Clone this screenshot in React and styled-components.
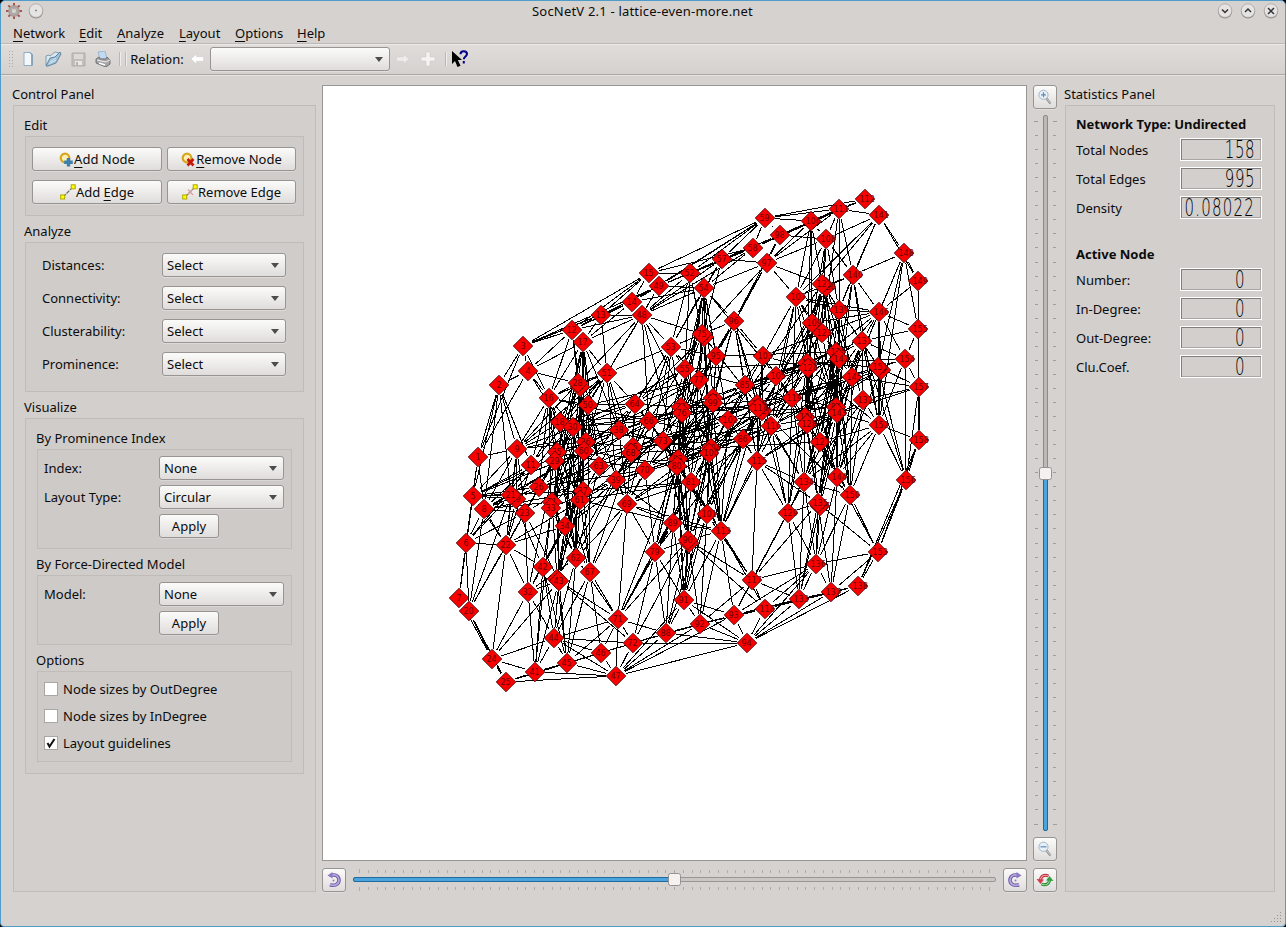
import React from "react";
import styled, { createGlobalStyle, css } from "styled-components";

const Global = createGlobalStyle`
  * { box-sizing: border-box; }
  html, body { margin: 0; background: #000; }
  body { font-family: "Noto Sans", sans-serif; font-size: 13px; letter-spacing: 0; color: #0c0c0c; }
`;

const Window = styled.div`
  width: 1286px; height: 927px; overflow: hidden;
  border: 1px solid #4f9cc8; border-radius: 5px 5px 4px 4px;
  background: #d6d2cf;
  display: flex; flex-direction: column;
`;
const TitleBar = styled.header`
  height: 22px; flex: none; padding: 0 6px 2px 5px;
  display: grid; grid-template-columns: 100px 1fr 100px; align-items: center;
  text-align: center; letter-spacing: 0.2px;
`;
const TitleSide = styled.div`
  display: flex; gap: ${p => p.$gap}px; justify-content: ${p => p.$end ? "flex-end" : "flex-start"};
`;
const MenuBar = styled.nav`
  height: 21px; flex: none; display: flex; padding-left: 12px; align-items: center;
  border-bottom: 1px solid #bdb9b6;
`;
const MenuItem = styled.span`
  width: ${p => p.$w}px; white-space: nowrap; line-height: 20px;
`;
const Key = styled.span`
  text-decoration: underline; text-underline-offset: 3px; text-decoration-thickness: 1px;
`;
const ToolBar = styled.div`
  height: 31px; flex: none; display: flex; align-items: center; padding: 0 0 1px 7px;
  border-top: 1px solid #eceae8; border-bottom: 1px solid #aaa6a3;
  background: linear-gradient(#dfdcd9, #d5d1ce);
`;
const ToolSlot = styled.span`
  width: ${p => p.$w}px; height: 28px; display: flex; align-items: center; justify-content: center;
`;
const raised = css`
  border: 1px solid #989491; border-radius: 3px;
  background: linear-gradient(#fbfbfa, #dfdddc);
  box-shadow: 0 1px 0 rgba(255,255,255,.25);
`;
const Combo = styled.div`
  ${raised}
  width: ${p => p.$w}px; height: 24px; padding: 0 6px 0 4px;
  display: flex; align-items: center; justify-content: space-between;
`;
const Arrow = styled.span`
  border: 4px solid transparent; border-top: 5px solid #4c4c4c; border-bottom: 0;
`;
const Button = styled.button`
  ${raised}
  width: ${p => p.$w}px; height: 24px; padding: 0; font: inherit; letter-spacing: inherit; color: inherit;
  display: flex; align-items: center; justify-content: center; white-space: nowrap;
`;
const Body = styled.main`
  flex: 1; display: flex; padding: 9px 10px 0 12px; border-top: 1px solid #e6e4e2;
`;
const Side = styled.section`
  width: ${p => p.$w}px; flex: none; height: 807px; display: flex; flex-direction: column;
  margin-left: ${p => p.$push ? "auto" : 0};
`;
const Label = styled.div`
  height: ${p => p.$h || 20}px; line-height: ${p => p.$lh || 18}px; margin-left: -1px; flex: none; white-space: nowrap;
`;
const Box = styled.div`
  border: 1px solid #c0bcb9; background: rgba(120,110,105,.02);
  height: ${p => p.$h}px; padding: ${p => p.$pad || "0"};
  flex: none;
`;
const ButtonGrid = styled.div`
  display: grid; grid-template-columns: 130px 129px; column-gap: 5px; row-gap: 9px;
`;
const Row = styled.div`
  display: flex; align-items: center; height: 24px; margin-bottom: ${p => p.$mb}px;
`;
const RowLabel = styled.span`
  width: ${p => p.$w}px; flex: none; white-space: nowrap;
`;
const Check = styled.label`
  height: 27px; display: flex; align-items: center; gap: 5px; white-space: nowrap;
`;
const CheckBox = styled.span`
  width: 14px; height: 14px; border: 1px solid #aaa6a2; background: #fff; display: flex;
`;
const Center = styled.section`
  margin-left: 6px; width: 735px; flex: none; display: grid;
  grid-template-columns: 705px 24px; grid-template-rows: 776px 24px; column-gap: 6px; row-gap: 7px;
`;
const Canvas = styled.div`
  border: 1px solid #999592; background: #fff;
`;
const VTools = styled.div`
  display: flex; flex-direction: column; justify-content: space-between;
`;
const HTools = styled.div`
  display: flex; justify-content: space-between;
`;
const StatRow = styled.div`
  display: flex; justify-content: space-between; align-items: center; height: 23px; margin-bottom: 6px;
`;
const Lcd = styled.div`
  width: 82px; height: 23px; padding-right: ${p => p.$pr}px;
  border: 1px solid #fff; box-shadow: inset 1px 1px 0 #817d7a, inset -1px -1px 0 #aaa6a3;
  display: flex; justify-content: flex-end; align-items: center;
  font: 200 15px "DejaVu Sans Light", "DejaVu Sans", sans-serif; letter-spacing: ${p => p.$ls}px;
`;
const LcdText = styled.span`
  transform: scaleY(1.6); line-height: 14px; color: #000;
`;
const Heading = styled.div`
  font-weight: 700; height: ${p => p.$h}px; padding-top: ${p => p.$pt || 0}px; line-height: 20px; white-space: nowrap;
`;
const StatusBar = styled.footer`
  height: 20px; display: flex; justify-content: flex-end; align-items: flex-end; padding: 0 3px 3px 0;
`;

const NODES = `1,478,457 2,499,385 3,523,346 4,528,371 5,473,496 6,466,543 7,459,598 8,484,509 9,517,449 11,531,465
12,572,330 13,601,315 14,632,302 15,649,273 16,549,398 17,583,342 18,560,422 30,573,427 27,580,387 28,578,383 20,469,611
19,516,499 21,511,495 22,506,545 23,525,513 24,492,659 25,506,682 26,539,487 35,557,452 29,555,461 31,552,502 33,551,508
34,565,526 32,528,592 36,586,442 60,584,451 37,583,491 61,580,500 38,619,430 39,616,480 41,535,672 42,543,567 40,557,579 43,559,581
44,554,638 45,567,663 46,601,653 47,616,676 48,642,315 49,659,286 50,588,405 51,607,373 52,690,273 53,671,347 54,704,288
55,685,369 57,722,259 58,753,248 59,765,218 62,576,558 63,599,466 64,635,404 66,649,421 67,590,572 65,633,447 68,631,453
69,627,504 70,645,470 71,618,619 72,633,643 73,663,441 78,704,337 75,702,334 74,681,407 76,682,413 77,699,380 79,655,552
83,678,459 80,677,466 81,691,482 85,745,385 86,743,439 88,666,633 89,673,523 82,689,543 90,688,540 91,684,600 92,700,624
93,734,615 94,747,643 95,716,356 96,734,321 97,767,263 98,780,235 87,713,398 99,713,403 104,711,448 100,709,453 101,707,514
102,728,420 103,763,356 105,776,376 106,811,221 107,796,297 108,826,239 109,812,323 111,839,209 112,865,199 113,721,531
110,757,404 120,762,411 114,758,408 115,757,461 116,771,426 117,752,580 118,765,609 119,792,398 130,826,287 121,822,284
123,822,333 122,807,363 124,808,368 126,805,417 128,807,424 127,820,442 129,788,513 131,862,341 132,863,400 133,799,599
134,804,482 147,820,506 135,818,503 136,816,564 137,831,592 138,858,586 139,839,310 140,853,275 141,879,215 125,836,352
142,839,359 145,852,377 84,836,407 143,837,413 144,837,477 146,879,312 148,904,253 149,918,281 150,850,495 56,881,370
151,878,367 152,879,425 153,878,552 154,905,359 155,918,329 156,906,480 157,919,387 158,919,440`
  .split(/\s+/).map(t => t.split(",").map(Number));
const at = new Map(NODES.map(n => [n[0], n]));

const LINKS = `1:2,3,4,5,6,7,8,9 2:3,4,5,9,11,8,21 3:4,12,13,14,15,16,49 4:12,17,16,28,18,1 5:6,7,9,8,11,21 6:7,8,20,22,21,23,11
7:20,24,5 8:9,11,22,23,20,21 9:21,22,16,18,23,11,28 20:24,25,22,21,23 24:25,32,41,43,44 22:32,42,21,23,34,9,11,24
25:41,45,46,47,72 41:32,42,43,45,46,47,44,33 32:42,43,34,44,23,62 44:42,43,46,47,71,72,45,62,67 45:42,43,46,47,62,67,71,40,72
46:71,72,88,67,47 47:71,72,88,91,92,93,94 71:67,62,43,88,79,80,90,69,72,89,81 72:71,88,92,79,90,94,43,93 88:79,90,92,93,94,89,101,91
91:79,90,92,93,89,101,113 92:90,93,94,101,113,118,117 93:94,117,118,113,129,134,136,133,138 94:118,133,137,138,91,136
117:113,90,129,118,136,133,135,115,101,134 118:133,136,137,138,113,90 133:129,136,137,138,134,135,147 136:129,134,135,147,144,150,153,137
137:150,144,135,153,138 138:153,156,158 153:156,150,135,144,158 156:158,152,151,154,157 158:157,155,152,149 157:155,154,151,145,132,149
155:149,148,154,146,131 154:146,151,152,145,131 149:148,146,141 148:141,146,151,152,140,145 141:112,111,140,108,107,139,121
112:111,106,98,59,58 111:106,108,59,98,140,139,123,97,142 106:108,98,59,58,97,107,121,122,109 108:98,97,107,121,109,139,140,123
98:58,97,96,57,52 97:58,57,107,96,95,121,54,75 107:109,123,121,122,139,103,124,115,100,116 96:54,75,95,103,77,85,53
59:58,57,52,15,49,14,98 58:57,52,49,15,54,48 57:52,49,54,48,75,53,97 52:49,15,48,54,53,75,55 54:49,75,53,55,48,77,14
15:14,49,13,12,52,3 14:13,49,48,12,17 13:12,17,48,51,49 12:17,28,16,27,48 17:28,16,48,51,50,60 48:51,53,75,50,28 49:48,51,13
51:50,28,64,30,60,38,16,9,18 16:18,30,9,11,28,50,29,26 53:75,55,77,64,51,95,65,68 146:140,131,151,139,142,145,152 140:139,130,131,142,143,107,152
131:151,154,145,139,132,143,127,156 129:135,134,127,126,115,119,116 79:80,81,89,90,69,83,70,100 69:67,62,79,70,39,89,71,68,80 113:101,90,81,115,100,89,86,102,116
152:143,127,150,144,132 150:143,132,127,145,134 115:102,86,134,135,103,85 64:55,50,38,66,73,60,77`
  .split(/\s+/).flatMap(t => {
    const [a, rest] = t.split(":");
    return rest.split(",").map(b => [+a, +b]);
  });

// Open areas of the drawing: cx, cy, rx, ry.
const HOLES = [[622, 350, 21, 30], [533, 422, 11, 19], [760, 307, 18, 34], [628, 557, 22, 42], [758, 522, 22, 46],
  [855, 242, 15, 16], [868, 460, 14, 24], [890, 335, 10, 12], [523, 560, 9, 15]];
const crossesHole = (p, q) => HOLES.some(([cx, cy, rx, ry]) => {
  for (let t = 0; t <= 1; t += 0.04) {
    const x = (p[1] + (q[1] - p[1]) * t - cx) / rx;
    const y = (p[2] + (q[2] - p[2]) * t - cy) / ry;
    if (x * x + y * y < 1) return true;
  }
  return false;
});
const scatter = (a, b) => {
  const v = Math.sin(a * 12.9898 + b * 78.233) * 43758.5453;
  return (v - Math.floor(v)) * 100;
};
const buildEdges = () => {
  const seen = new Set();
  const out = [];
  const add = (a, b) => {
    const k = Math.min(a, b) * 1000 + Math.max(a, b);
    if (a === b || seen.has(k)) return;
    seen.add(k);
    out.push([at.get(a), at.get(b)]);
  };
  LINKS.forEach(([a, b]) => add(a, b));
  const inner = NODES.filter(([id, x, y]) => {
    const u = (x - 697) / 225, v = (y - 440 + (x - 697) * 0.28) / 165;
    return id !== 153 && u * u + v * v < 1;
  });
  inner.forEach((p, i) => inner.slice(i + 1).forEach(q => {
    const dx = Math.abs(p[1] - q[1]), dy = Math.abs(p[2] - q[2]);
    const rising = (q[1] - p[1]) * (q[2] - p[2]) < 0;
    const h = scatter(p[0], q[0]);
    let chance = 0;
    if (dx < 38 && dy > 40 && dy < 172) chance = 38;
    else if (dx > 35 && dx < 125 && dy < dx * 0.62 && rising) chance = 30;
    else if (dx > 35 && dx < 110 && dy < dx * 0.3) chance = 12;
    else if (dx > 30 && dx < 95 && dy > 40 && dy < 140) chance = rising ? 16 : 8;
    if (h < chance && !crossesHole(p, q)) add(p[0], q[0]);
  }));
  return out;
};
const EDGES = buildEdges();
const edgePath = EDGES.map(([p, q]) => {
  const dx = q[1] - p[1], dy = q[2] - p[2], l = Math.hypot(dx, dy);
  if (l < 22) return "";
  const ux = dx / l * 10, uy = dy / l * 10;
  return `M${(p[1] + ux).toFixed(1)} ${(p[2] + uy).toFixed(1)}L${(q[1] - ux).toFixed(1)} ${(q[2] - uy).toFixed(1)}`;
}).join("");

// Nodes are painted in order, so a later one lies over the label of an earlier one.
const Graph = () => (
  <svg width="703" height="774" viewBox="323 86 703 774" style={{ display: "block" }}>
    <path d={edgePath} stroke="#000" strokeWidth="1" fill="none" shapeRendering="crispEdges" />
    {NODES.map(([id, x, y]) => (
      <g key={id}>
        <path d={`M${x - 9.8} ${y}L${x} ${y - 9.8}L${x + 9.8} ${y}L${x} ${y + 9.8}Z`} fill="#fb0000" stroke="#3a0000" strokeWidth="0.8" />
        <text x={x - (id < 10 ? 2.5 : 5.5)} y={y + 2.7} fontSize="8" fontFamily="DejaVu Sans, sans-serif" fill="#650000">{id}</text>
      </g>
    ))}
  </svg>
);

const Icon = ({ s = 16, children, vb }) => (
  <svg width={s} height={s} viewBox={vb || `0 0 ${s} ${s}`} fill="none" style={{ flex: "none" }}>{children}</svg>
);
const Orb = ({ d }) => (
  <Icon s={16}>
    <circle cx="8" cy="8.6" r="7" fill="#8f8b88" />
    <circle cx="8" cy="7.6" r="6.8" fill="#e6e4e3" stroke="#a29e9b" strokeWidth=".7" />
    <path d={d} stroke="#333" strokeWidth="1.5" />
  </Icon>
);
const AppIcon = () => (
  <Icon s={16}>
    <circle cx="8" cy="8" r="4.6" stroke="#a8a19d" strokeWidth="2.6" />
    {[0, 45, 90, 135, 180, 225, 270, 315].map(a => (
      <rect key={a} x="7" y="0" width="2" height="2.4" fill="#a9544c" transform={`rotate(${a} 8 8)`} />
    ))}
    <circle cx="8" cy="8" r="2.7" stroke="#8d8784" strokeWidth=".6" />
  </Icon>
);
const NewIcon = () => <Icon s={16}><path d="M4 1.5h6l2 2v11H4z" fill="#f4f8fb" stroke="#8fb0c8" /><path d="M10 1.5l2 2v11" stroke="#5580a0" /></Icon>;
const OpenIcon = () => (
  <Icon s={18}>
    <path d="M2 15V6l3-1 1 1 5-4 4 1-6 6z" fill="#d9e6ee" stroke="#6d8ba0" strokeWidth=".8" />
    <path d="M2 16L6 8l5-1 5-5 1 2-5 9-8 3z" fill="#9fc1d7" stroke="#4d7590" strokeWidth=".8" />
    <path d="M6 12l6-4M5 14l7-4" stroke="#d6e7f1" />
  </Icon>
);
const SaveIcon = () => <Icon s={15}><path d="M1 1h13v13H1z" fill="#c2bebb" stroke="#b2aeab" /><path d="M3 2h9v5H3z" fill="#dcd9d7" /><path d="M4 9h7v4H4z" fill="#eae8e7" /><path d="M5 10h2v3H5z" fill="#b5b1ae" /></Icon>;
const PrintIcon = () => (
  <Icon s={16}>
    <path d="M3 1l7-1 2 8H5z" fill="#c2d9f2" stroke="#8aa7c6" strokeWidth=".7" />
    <path d="M1 8l3-2 1 2h6l1-2 3 3v4l-4 3-10-4z" fill="#a5a5a5" stroke="#5f5f5f" strokeWidth=".8" />
    <path d="M2 9l9 2 4-2" stroke="#eee" /><path d="M4 12l6 2" stroke="#fff" strokeWidth="1.5" />
  </Icon>
);
const BackArrow = ({ flip }) => (
  <Icon s={14}><path transform={flip ? "translate(14 0) scale(-1 1)" : undefined} d="M1 7l5.500-5v2.800h7v4.400h-7V12z" fill={flip ? "#eeecea" : "#fff"} stroke="#c8c5c2" strokeWidth=".4" /></Icon>
);
const HelpPointer = () => (
  <Icon s={18}>
    <path d="M1 1v13l3-3 2.500 6 3-1.200-2.600-5.800H11z" fill="#000" />
    <path d="M9.500 4.200C9.500 2.500 10.800 1.300 12.700 1.300c2 0 3.300 1.200 3.300 2.800 0 2.300-3.200 2.500-3.200 5.200" stroke="#00008c" strokeWidth="2" />
    <path d="M11.800 11h2v2.400h-2z" fill="#00008c" />
  </Icon>
);
const NodeIcon = ({ remove }) => (
  <Icon s={15}>
    <circle cx="6" cy="6" r="4.300" fill="#fbf1b8" stroke="#d9a51c" strokeWidth="2.200" />
    {remove
      ? <path d="M6.500 7l6 6.500M12.500 7l-6 6.500" stroke="#c2160e" strokeWidth="2.600" />
      : <path d="M9.500 6v8.500M5.200 10.200h8.600" stroke="#3a7fae" strokeWidth="3.400" />}
  </Icon>
);
const EdgeIcon = ({ remove }) => (
  <Icon s={16}>
    <path d="M3 13L13 3" stroke="#666" strokeWidth="1.200" strokeDasharray="4 1" />
    <rect x=".7" y="11" width="4" height="4" fill="#ff0" stroke="#b0a800" />
    <rect x="11.200" y=".8" width="4" height="4" fill="#ff0" stroke="#b0a800" />
    {remove && <path d="M6 5.500l5 5.500M10.500 5.500L6 10.500" stroke="#d9a0a0" strokeWidth="1.200" />}
  </Icon>
);
const Magnifier = ({ plus }) => (
  <Icon s={16}>
    <path d="M9.500 9.500l4 5" stroke="#8b8b8b" strokeWidth="2.200" /><path d="M10 10l3.400 4" stroke="#e7e7e7" strokeWidth=".8" />
    <circle cx="6.500" cy="5.800" r="4.600" fill="#e6f0f8" stroke="#a3b7c9" />
    <path d={plus ? "M6.500 3.300v5M4 5.800h5" : "M3.500 5.800h6"} stroke="#5f8cb5" strokeWidth="1.200" />
  </Icon>
);
const RotateLeft = () => (
  <Icon s={18}>
    <path d="M6 4.300c5-1.300 8 1.200 8 4.900s-4 6.300-9 4.500" stroke="#6c5ba6" strokeWidth="3.600" />
    <path d="M6 4.300c5-1.300 8 1.200 8 4.900s-4 6.300-9 4.500" stroke="#b4a5dd" strokeWidth="1.800" />
    <path d="M7.500 1v6.500L2.500 4.500z" fill="#8c7bc4" />
    <circle cx="8.500" cy="9.500" r="1" fill="#8c7bc4" />
  </Icon>
);
const RotateRight = () => (
  <Icon s={18}>
    <path d="M12 4.300C7 3 4 5.500 4 9.200s4 6.300 9 4.500" stroke="#6c5ba6" strokeWidth="3.600" />
    <path d="M12 4.300C7 3 4 5.500 4 9.200s4 6.300 9 4.500" stroke="#b4a5dd" strokeWidth="1.800" />
    <path d="M10.500 1v6.500l5-3z" fill="#8c7bc4" />
    <circle cx="9.500" cy="9.500" r="1" fill="#8c7bc4" />
  </Icon>
);
const Refresh = () => (
  <Icon s={18}>
    <path d="M4.500 9.500c0-4.500 4-6.500 8-4.500" stroke="#b92c38" strokeWidth="3" /><path d="M4.500 9.500c0-4.500 4-6.500 8-4.500" stroke="#f0a0a4" strokeWidth="1.100" />
    <path d="M.5 8l7.500.5-3.500 4.500z" fill="#d43d49" />
    <path d="M13.500 8.500c0 4.500-4 6.500-8 4.500" stroke="#23862e" strokeWidth="3" /><path d="M13.500 8.500c0 4.500-4 6.500-8 4.500" stroke="#8fd795" strokeWidth="1.100" />
    <path d="M17.500 10l-7.500-.5L13.500 5z" fill="#32a03e" />
  </Icon>
);

const range = n => Array.from({ length: n }, (_, i) => i);
const VSlider = () => (
  <svg width="24" height="718" viewBox="1033 114 24 718">
    {range(51).map(i => {
      const y = Math.round(121 + i * 14.05) + 0.5, e = i === 0 || i === 50 ? 0 : 1;
      return <path key={i} d={`M${1034 + e} ${y}h${4 - e}M1053 ${y}h${4 - e}`} stroke="#a09c99" />;
    })}
    <rect x="1043.500" y="115.500" width="4" height="715" rx="1.500" fill="#bdb9b6" stroke="#8f8b88" />
    <rect x="1043.500" y="474" width="4" height="356.500" rx="1.500" fill="#4aa5df" stroke="#226a9b" />
    <rect x="1039.500" y="467.500" width="12" height="12" rx="2" fill="#f3f2f1" stroke="#95918e" />
  </svg>
);
const HSlider = () => (
  <svg width="645" height="24" viewBox="352 868 645 24">
    {range(73).map(i => {
      const x = Math.round(359 + i * 8.75) + 0.5, e = i === 0 || i === 72 ? 0 : 1;
      return <path key={i} d={`M${x} ${869 + e}v${4 - e}M${x} 887v${4 - e}`} stroke="#b0aca9" />;
    })}
    <rect x="353.500" y="877.500" width="642" height="4" rx="1.500" fill="#c9c6c3" stroke="#9a9693" />
    <rect x="353.500" y="877.500" width="321" height="4" rx="1.500" fill="#4aa5df" stroke="#226a9b" />
    <rect x="668.500" y="873.500" width="12" height="12" rx="2" fill="#f3f2f1" stroke="#95918e" />
  </svg>
);
const Grip = () => (
  <svg width="7" height="18">{range(6).map(i => <path key={i} d={`M1 ${i * 3 + 1.500}h1M4 ${i * 3 + 1.500}h1`} stroke="#aaa6a3" />)}</svg>
);
const Sep = ({ double }) => (
  <svg width="9" height="14"><path d={double ? "M1.500 0v14M7.500 0v14" : "M4.500 0v14"} stroke="#bbb7b4" /><path d={double ? "M2.500 0v14M8.500 0v14" : "M5.500 0v14"} stroke="#efedec" /></svg>
);
const SizeGrip = () => (
  <svg width="12" height="12">{range(4).map(r => range(r + 1).map(c => (
    <rect key={`${r}${c}`} x={10 - c * 3} y={1 + r * 3} width="1" height="1" fill="#98948f" />
  )))}</svg>
);

const Select = ({ w, children }) => <Combo $w={w}><span>{children}</span><Arrow /></Combo>;
const Field = ({ label, w, mb = 5, lw, children }) => (
  <Row $mb={mb}><RowLabel $w={lw}>{label}</RowLabel><Select w={w}>{children}</Select></Row>
);
const Stat = ({ label, value, wide, zero }) => (
  <StatRow><span>{label}</span><Lcd $pr={zero ? 16 : 6} $ls={wide ? 1.2 : 0.5}><LcdText>{value}</LcdText></Lcd></StatRow>
);

const MENUS = [["Network", 66], ["Edit", 38], ["Analyze", 62], ["Layout", 56], ["Options", 62], ["Help", 40]];

export default function App() {
  return (
    <>
      <Global />
      <Window>
        <TitleBar>
          <TitleSide $gap={6}><AppIcon /><Orb d="M7.500 7.500h1" /></TitleSide>
          <span>SocNetV 2.1 - lattice-even-more.net</span>
          <TitleSide $gap={7} $end><Orb d="M5 6.500l3 3 3-3" /><Orb d="M5 9l3-3 3 3" /><Orb d="M5 5l6 6M11 5l-6 6" /></TitleSide>
        </TitleBar>
        <MenuBar>
          {MENUS.map(([m, w]) => <MenuItem key={m} $w={w}><Key>{m[0]}</Key>{m.slice(1)}</MenuItem>)}
        </MenuBar>
        <ToolBar>
          <Grip />
          <ToolSlot $w={25}><NewIcon /></ToolSlot>
          <ToolSlot $w={25}><OpenIcon /></ToolSlot>
          <ToolSlot $w={26}><SaveIcon /></ToolSlot>
          <ToolSlot $w={24}><PrintIcon /></ToolSlot>
          <ToolSlot $w={15}><Sep double /></ToolSlot>
          <ToolSlot $w={54}>Relation:</ToolSlot>
          <ToolSlot $w={26}><BackArrow /></ToolSlot>
          <Combo $w={180}><span /><Arrow /></Combo>
          <ToolSlot $w={26}><BackArrow flip /></ToolSlot>
          <ToolSlot $w={24}><Icon s={16}><path d="M6 1h4v5h5v4h-5v5H6v-5H1V6h5z" fill="#f4f3f2" stroke="#c8c5c2" strokeWidth=".5" /></Icon></ToolSlot>
          <ToolSlot $w={11}><Sep /></ToolSlot>
          <ToolSlot $w={18}><HelpPointer /></ToolSlot>
        </ToolBar>
        <Body>
          <Side $w={303}>
            <Label>Control Panel</Label>
            <Box $h={787} $pad="10px 11px 0">
              <Label>Edit</Label>
              <Box $h={80} $pad="10px 6px">
                <ButtonGrid>
                  <Button><NodeIcon /><span><Key>A</Key>dd Node</span></Button>
                  <Button><NodeIcon remove /><span><Key>R</Key>emove Node</span></Button>
                  <Button><EdgeIcon /><span>Add <Key>E</Key>dge</span></Button>
                  <Button><EdgeIcon remove />Remove Edge</Button>
                </ButtonGrid>
              </Box>
              <Label $h={26} $lh={31}>Analyze</Label>
              <Box $h={150} $pad="10px 16px">
                {["Distances:", "Connectivity:", "Clusterability:", "Prominence:"].map(l => (
                  <Field key={l} label={l} lw={120} w={124} mb={9}>Select</Field>
                ))}
              </Box>
              <Label $h={26} $lh={31}>Visualize</Label>
              <Box $h={356} $pad="10px 11px 0">
                <Label>By Prominence Index</Label>
                <Box $h={100} $pad="6px">
                  <Field label="Index:" lw={115} w={125}>None</Field>
                  <Field label="Layout Type:" lw={115} w={125}>Circular</Field>
                  <Row><RowLabel $w={115} /><Button $w={60}>Apply</Button></Row>
                </Box>
                <Label $h={26} $lh={31}>By Force-Directed Model</Label>
                <Box $h={70} $pad="6px">
                  <Field label="Model:" lw={115} w={125}>None</Field>
                  <Row><RowLabel $w={115} /><Button $w={60}>Apply</Button></Row>
                </Box>
                <Label $h={26} $lh={31}>Options</Label>
                <Box $h={91} $pad="3px 6px">
                  <Check><CheckBox />Node sizes by OutDegree</Check>
                  <Check><CheckBox />Node sizes by InDegree</Check>
                  <Check><CheckBox><Icon s={12}><path d="M2.500 6l2 3.500L9.500 2" stroke="#111" strokeWidth="2" /></Icon></CheckBox>Layout guidelines</Check>
                </Box>
              </Box>
            </Box>
          </Side>
          <Center>
            <Canvas><Graph /></Canvas>
            <VTools>
              <Button $w={24}><Magnifier plus /></Button>
              <VSlider />
              <Button $w={24}><Magnifier /></Button>
            </VTools>
            <HTools>
              <Button $w={24}><RotateLeft /></Button>
              <HSlider />
              <Button $w={24}><RotateRight /></Button>
            </HTools>
            <Button $w={24}><Refresh /></Button>
          </Center>
          <Side $w={210} $push>
            <Label>Statistics Panel</Label>
            <Box $h={787} $pad="8px 12px 0 10px">
              <Heading $h={24}>Network Type: Undirected</Heading>
              <Stat label="Total Nodes" value="158" />
              <Stat label="Total Edges" value="995" />
              <Stat label="Density" value="0.08022" wide />
              <Heading $h={43} $pt={19}>Active Node</Heading>
              <Stat label="Number:" value="0" zero />
              <Stat label="In-Degree:" value="0" zero />
              <Stat label="Out-Degree:" value="0" zero />
              <Stat label="Clu.Coef." value="0" zero />
            </Box>
          </Side>
        </Body>
        <StatusBar><SizeGrip /></StatusBar>
      </Window>
    </>
  );
}
